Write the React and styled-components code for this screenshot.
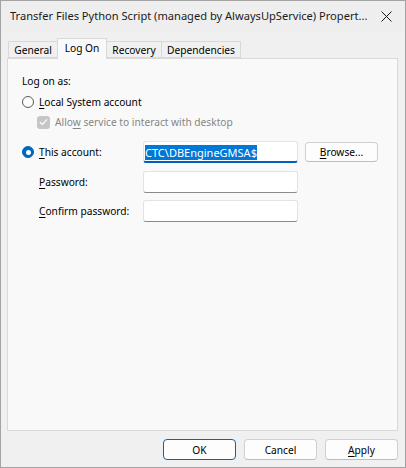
import styled, { createGlobalStyle } from 'styled-components';

const GlobalStyle = createGlobalStyle`
  html, body {
    margin: 0;
    padding: 0;
    background: #f0f0f0;
  }
  body {
    font-family: 'Segoe UI', 'Noto Sans', 'Liberation Sans', sans-serif;
    font-size: 10.2px;
    color: #000;
  }
  * {
    box-sizing: border-box;
  }
`;

const tabs = [
  { name: 'General', width: 50 },
  { name: 'Log On', width: 50, active: true },
  { name: 'Recovery', width: 56 },
  { name: 'Dependencies', width: 80 },
];

const App = () => (
  <>
    <GlobalStyle />
    <Window>
      <TitleBar>
        <Title>Transfer Files Python Script (managed by AlwaysUpService) Propert...</Title>
        <CloseIcon width="11" height="11" viewBox="0 0 11 11">
          <path d="M0.5 0.5 L10.5 10.5 M10.5 0.5 L0.5 10.5" stroke="#1a1a1a" strokeWidth="1" />
        </CloseIcon>
      </TitleBar>
      <Body>
        <TabStrip>
          {tabs.map(tab => (
            <Tab key={tab.name} $width={tab.width} $active={tab.active}>
              {tab.name}
            </Tab>
          ))}
        </TabStrip>
        <Panel>
          <Heading>Log on as:</Heading>
          <Row $gap={5}>
            <Radio />
            <span>
              <Key>L</Key>ocal System account
            </span>
          </Row>
          <Row $gap={4} $indent={15}>
            <CheckBox>
              <svg width="9" height="8" viewBox="0 0 9 8">
                <path d="M1 4.2 L3.4 6.5 L8 1.4" fill="none" stroke="#fff" strokeWidth="1.2" />
              </svg>
            </CheckBox>
            <Disabled>
              Allo<Key>w</Key> service to interact with desktop
            </Disabled>
          </Row>
          <FieldRow $gap={11}>
            <Radio $checked />
            <FieldLabel $width={104}>
              <Key>T</Key>his account:
            </FieldLabel>
            <Input $focused>
              <Selection>CTC\DBEngineGMSA$</Selection>
            </Input>
            <Button $small>
              <Key>B</Key>rowse...
            </Button>
          </FieldRow>
          <FieldRow $gap={8} $indent={17}>
            <FieldLabel $width={104}>
              <Key>P</Key>assword:
            </FieldLabel>
            <Input />
          </FieldRow>
          <FieldRow $gap={7} $indent={17}>
            <FieldLabel $width={104}>
              <Key>C</Key>onfirm password:
            </FieldLabel>
            <Input />
          </FieldRow>
        </Panel>
        <Footer>
          <Button $default>OK</Button>
          <Button>Cancel</Button>
          <Button>
            <Key>A</Key>pply
          </Button>
        </Footer>
      </Body>
    </Window>
  </>
);

const Window = styled.div`
  width: 406px;
  height: 468px;
  border: 1px solid #a3a3a3;
  background: #f0f0f0;
  display: flex;
  flex-direction: column;
`;

const TitleBar = styled.div`
  height: 30px;
  flex: none;
  display: flex;
  align-items: center;
  justify-content: space-between;
  padding: 0 13px 0 9px;
  background: #eeeeee;
`;

const Title = styled.div`
  white-space: nowrap;
  overflow: hidden;
  font-size: 11.1px;
  line-height: 16px;
  color: #1b1b1b;
`;

const CloseIcon = styled.svg`
  flex: none;
  margin-left: 8px;
`;

const Body = styled.div`
  flex: 1;
  display: flex;
  flex-direction: column;
  padding: 7px 7px 7px 6px;
`;

const TabStrip = styled.div`
  display: flex;
  align-items: flex-end;
  height: 20px;
  padding-left: 1px;
  position: relative;
  z-index: 1;
`;

const Tab = styled.div`
  width: ${p => p.$width}px;
  height: ${p => (p.$active ? 21 : 17)}px;
  margin-left: -1px;
  margin-bottom: ${p => (p.$active ? -1 : 0)}px;
  display: flex;
  align-items: center;
  justify-content: center;
  padding-bottom: ${p => (p.$active ? 3 : 0)}px;
  border: 1px solid #d9d9d9;
  border-bottom: ${p => (p.$active ? 'none' : '1px solid #d9d9d9')};
  background: ${p => (p.$active ? '#f9f9f9' : '#f0f0f0')};
  position: relative;
  z-index: ${p => (p.$active ? 2 : 1)};
  &:first-child {
    margin-left: 0;
  }
`;

const Panel = styled.div`
  flex: 1;
  border: 1px solid #d9d9d9;
  background: #f9f9f9;
  padding: 14px 14px;
  display: flex;
  flex-direction: column;
`;

const Heading = styled.div`
  line-height: 16px;
  height: 16px;
`;

const Row = styled.div`
  display: flex;
  align-items: center;
  gap: 5px;
  height: 16px;
  margin-top: ${p => p.$gap}px;
  padding-left: ${p => p.$indent || 0}px;
  white-space: nowrap;
`;

const FieldRow = styled.div`
  display: flex;
  align-items: center;
  height: 22px;
  margin-top: ${p => p.$gap}px;
  padding-left: ${p => p.$indent || 0}px;
  white-space: nowrap;
`;

const Radio = styled.span`
  flex: none;
  width: 12px;
  height: 12px;
  border-radius: 50%;
  margin-right: ${p => (p.$checked ? 5 : 0)}px;
  background: ${p => (p.$checked ? '#0067c0' : '#fdfdfd')};
  border: 1px solid ${p => (p.$checked ? '#0067c0' : '#5b5b5b')};
  display: flex;
  align-items: center;
  justify-content: center;
  &::after {
    content: '';
    display: ${p => (p.$checked ? 'block' : 'none')};
    width: 5px;
    height: 5px;
    border-radius: 50%;
    background: #fff;
  }
`;

const CheckBox = styled.span`
  flex: none;
  width: 13px;
  height: 13px;
  border-radius: 3px;
  background: #c6c6c6;
  display: flex;
  align-items: center;
  justify-content: center;
`;

const Disabled = styled.span`
  color: #858585;
`;

const Key = styled.u`
  text-decoration: underline;
  text-underline-offset: 2px;
  text-decoration-thickness: 1px;
`;

const FieldLabel = styled.span`
  width: ${p => p.$width}px;
  flex: none;
`;

const Input = styled.div`
  flex: none;
  width: 155px;
  height: 22px;
  background: #fff;
  border: 1px solid #e3e3e3;
  border-bottom: ${p => (p.$focused ? '2px solid #005fb8' : '1px solid #8a8a8a')};
  border-radius: 3px;
  display: flex;
  align-items: center;
  padding: 0 1px;
  padding-top: ${p => (p.$focused ? 1 : 0)}px;
  font-size: 11px;
`;

const Selection = styled.span`
  background: #0078d7;
  color: #fff;
  line-height: 15px;
`;

const Button = styled.button`
  flex: none;
  width: 73px;
  height: ${p => (p.$small ? 20 : 21)}px;
  margin-left: ${p => (p.$small ? 7 : 0)}px;
  font: inherit;
  color: #000;
  background: #fdfdfd;
  border: 1px solid ${p => (p.$default ? '#0067c0' : '#d0d0d0')};
  border-bottom-color: ${p => (p.$default ? '#0067c0' : '#bdbdbd')};
  border-radius: 4px;
  padding: 0;
  display: flex;
  align-items: center;
  justify-content: center;
`;

const Footer = styled.div`
  display: flex;
  justify-content: flex-end;
  gap: 8px;
  margin-top: 8px;
  height: 21px;
`;

export default App;
